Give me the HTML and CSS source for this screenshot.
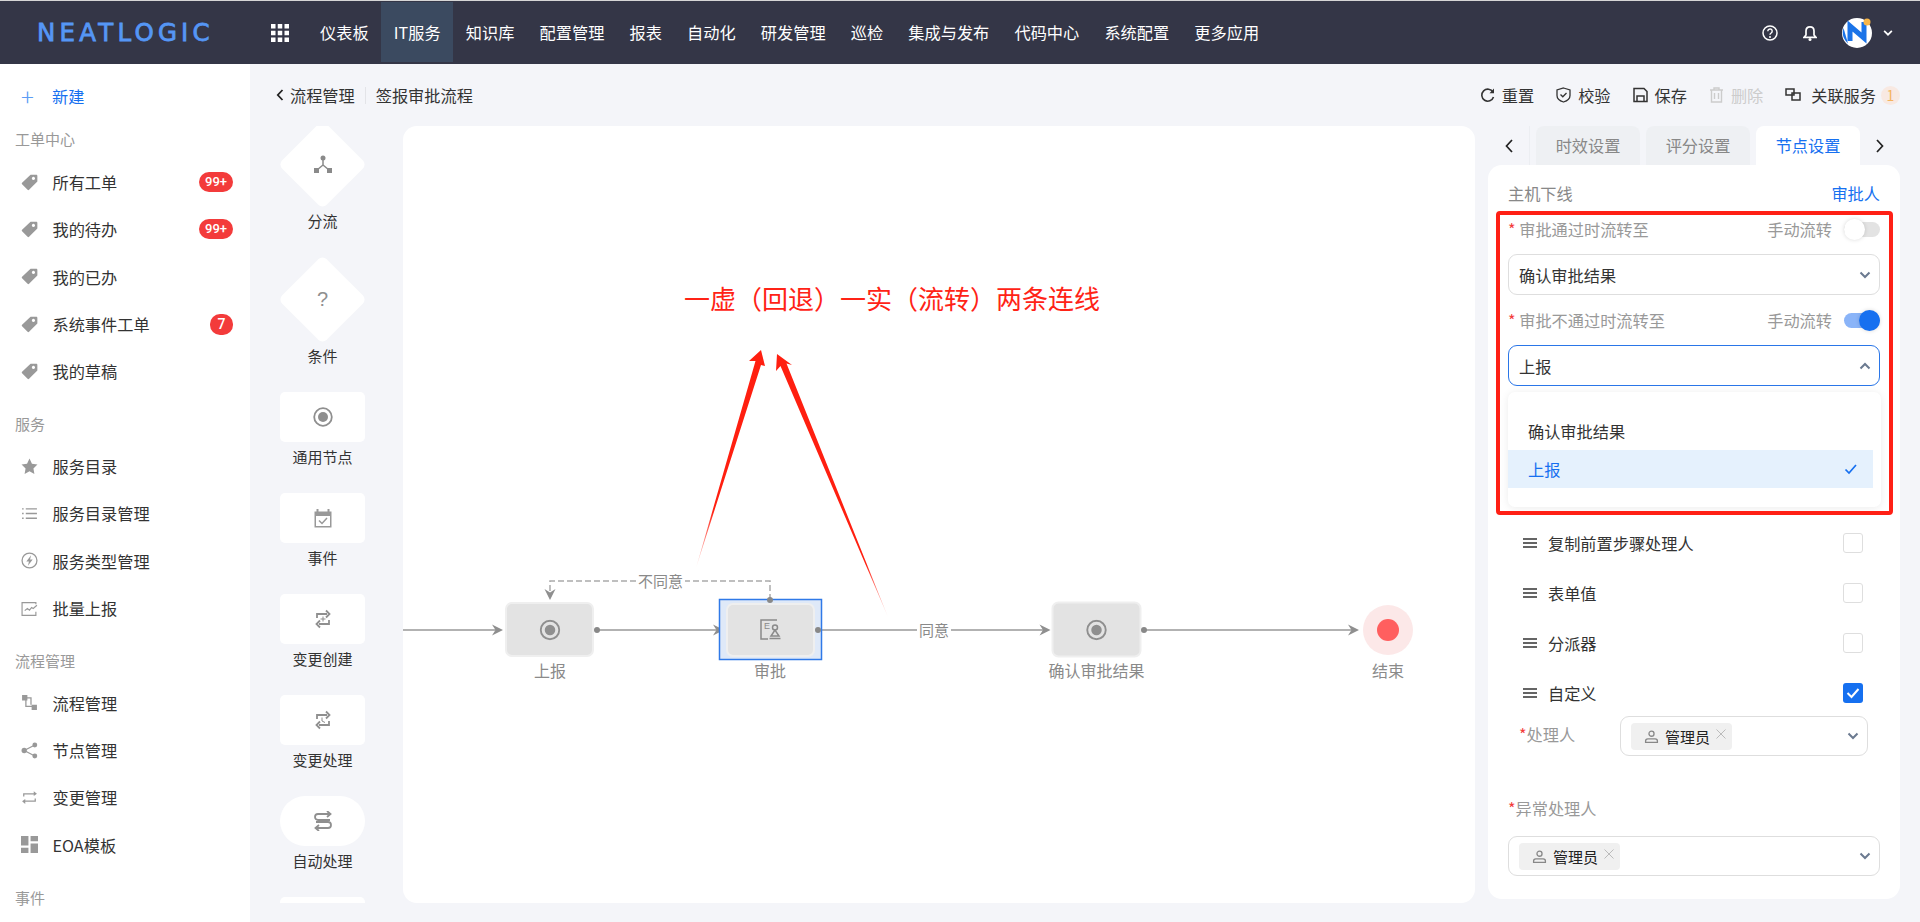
FILE: index.html
```html
<!DOCTYPE html>
<html lang="zh-CN">
<head>
  <meta charset="UTF-8" />
  <title>NeatLogic - 流程管理</title>
  <link rel="stylesheet" href="styles.css">
</head>
<body>
  <svg class="sprite" width="0" height="0">
    <symbol id="i-tag" viewBox="0 0 16 16"><path fill-rule="evenodd" d="M9 .6h5.400c.6 0 1 .4 1 1V7L7.600 14.900a1 1 0 0 1-1.400 0L1 9.700a1 1 0 0 1 0-1.400zM11.700 2.700a1.500 1.500 0 1 0 .01 0z"/></symbol>
    <symbol id="i-chev" viewBox="0 0 14 14"><path d="M2.500 4.500 7 9l4.500-4.500" fill="none" stroke="currentColor" stroke-width="2"/></symbol>
    <symbol id="i-close" viewBox="0 0 12 12"><path d="M1.500 1.500l9 9m0-9l-9 9" fill="none" stroke="currentColor" stroke-width="1"/></symbol>
    <symbol id="i-user" viewBox="0 0 16 16"><g fill="none" stroke="currentColor" stroke-width="1.400"><circle cx="8" cy="5" r="2.700"/><path d="M1.700 14.300v-1.500c0-1.400 1-2.300 2.400-2.300h7.800c1.400 0 2.400.9 2.400 2.300v1.500z"/></g></symbol>
    <symbol id="i-menu" viewBox="0 0 14 12"><path d="M0 2h14M0 6h14M0 10h14" stroke="currentColor" stroke-width="1.500"/></symbol>
    <symbol id="i-swap" viewBox="0 0 20 20"><path d="M4 9V5h10M13 1.500 16.500 5 13 8.500M16 11v4H6M7 11.500 3.500 15 7 18.500" fill="none" stroke="currentColor" stroke-width="1.800"/></symbol>
    <symbol id="i-node" viewBox="0 0 20 20"><circle cx="10" cy="10" r="8.800" fill="none" stroke="currentColor" stroke-width="1.800"/><circle cx="10" cy="10" r="5" fill="currentColor"/></symbol>
  </svg>

  <header class="topbar">
    <div class="logo">NEATLOGIC</div>
    <svg class="apps" width="18" height="18" viewBox="0 0 18 18" fill="#fff"><path d="M0 0h4.500v4.500H0zM6.750 0h4.500v4.500h-4.500zM13.500 0H18v4.500h-4.500zM0 6.750h4.500v4.500H0zM6.750 6.750h4.500v4.500h-4.500zM13.500 6.750H18v4.500h-4.500zM0 13.500h4.500V18H0zM6.750 13.500h4.500V18h-4.500zM13.500 13.500H18V18h-4.500z"/></svg>
    <nav class="nav">
      <a>仪表板</a>
      <a class="active">IT服务</a>
      <a>知识库</a>
      <a>配置管理</a>
      <a>报表</a>
      <a>自动化</a>
      <a>研发管理</a>
      <a>巡检</a>
      <a>集成与发布</a>
      <a>代码中心</a>
      <a>系统配置</a>
      <a>更多应用</a>
    </nav>
    <div class="top-right">
      <svg width="16" height="16" viewBox="0 0 16 16"><circle cx="8" cy="8" r="7" fill="none" stroke="#fff" stroke-width="1.500"/><path d="M5.800 6.200a2.200 2.200 0 1 1 3.400 1.800c-.8.500-1.200 1-1.200 1.800" fill="none" stroke="#fff" stroke-width="1.400"/><circle cx="8" cy="12" r="1" fill="#fff"/></svg>
      <svg width="14" height="16" viewBox="0 0 14 16"><path d="M7 1.800c-2.700 0-4 2-4 4.200v4L1 12.300h12L11 10V6c0-2.200-1.300-4.200-4-4.200z" fill="none" stroke="#fff" stroke-width="1.700"/><circle cx="7" cy="14.500" r="1.500" fill="#fff"/></svg>
      <svg class="avatar" width="32" height="32" viewBox="0 0 32 32"><circle cx="15" cy="17" r="15" fill="#fff"/><path d="M1.500 12A15 15 0 0 0 6 27.500z" fill="#1a73e8"/><path d="M8 25V10l14 12V6" fill="none" stroke="#1a73e8" stroke-width="5"/><circle cx="25" cy="6" r="3.500" fill="#f7b547"/></svg>
      <svg class="caret" width="12" height="12" viewBox="0 0 14 14"><use href="#i-chev"/></svg>
    </div>
  </header>

  <div class="layout">
    <aside class="sidebar">
      <a class="side-new"><span class="plus">+</span>新建</a>

      <div class="side-title first">工单中心</div>
      <a class="side-item"><svg class="side-icon"><use href="#i-tag"/></svg>所有工单<span class="badge">99+</span></a>
      <a class="side-item"><svg class="side-icon"><use href="#i-tag"/></svg>我的待办<span class="badge">99+</span></a>
      <a class="side-item"><svg class="side-icon"><use href="#i-tag"/></svg>我的已办</a>
      <a class="side-item"><svg class="side-icon"><use href="#i-tag"/></svg>系统事件工单<span class="badge round">7</span></a>
      <a class="side-item"><svg class="side-icon"><use href="#i-tag"/></svg>我的草稿</a>

      <div class="side-title">服务</div>
      <a class="side-item"><svg class="side-icon" viewBox="0 0 16 16"><path d="M8 .5l2.300 4.900 5.200.7-3.800 3.700.9 5.300L8 12.500l-4.600 2.600.9-5.300L.5 6.100l5.200-.7z"/></svg>服务目录</a>
      <a class="side-item"><svg class="side-icon" viewBox="0 0 16 16"><path d="M1 3h1.500v1.300H1zM4.500 3H15v1.300H4.500zM1 7.400h1.500v1.300H1zM4.500 7.400H15v1.300H4.500zM1 11.800h1.500v1.300H1zM4.500 11.800H15v1.300H4.500z"/></svg>服务目录管理</a>
      <a class="side-item"><svg class="side-icon" viewBox="0 0 16 16"><circle cx="8" cy="8" r="7" fill="none" stroke="#999" stroke-width="1.200"/><path d="M9.500 3 5 9h2.500l-1 4L11 7H8.500z"/></svg>服务类型管理</a>
      <a class="side-item"><svg class="side-icon" viewBox="0 0 16 16"><path d="M14 4V2.500H1v12h13V11M3.500 10l2.500-2 2 1.500 2-2.500 1.500 1L15 5" fill="none" stroke="#999" stroke-width="1.100"/></svg>批量上报</a>

      <div class="side-title">流程管理</div>
      <a class="side-item"><svg class="side-icon" viewBox="0 0 16 16"><path d="M1 1h5v5H1zM10 10h5v5h-5zM6 3h4v7H8.800V4.200H6zM4 6h1.200v5H10v1.200H4z"/></svg>流程管理</a>
      <a class="side-item"><svg class="side-icon" viewBox="0 0 16 16"><circle cx="3" cy="8" r="2.500"/><circle cx="13" cy="2.800" r="2.300"/><circle cx="13" cy="13.200" r="2.300"/><path d="M3 8l10-5.200M3 8l10 5.200" stroke="#999" stroke-width="1.200"/></svg>节点管理</a>
      <a class="side-item"><svg class="side-icon" viewBox="0 0 16 16"><path d="M2 7V4h10V2l3 2.500L12 6.500V5.200H3.200V7zM14 9v3H4v2l-3-2.500L4 9.500v1.300h8.800V9z"/></svg>变更管理</a>
      <a class="side-item"><svg class="side-icon" viewBox="0 0 16 16"><path d="M0 0h7v9H0zM9 0h7v5H9zM0 11h7v5H0zM9 7h7v9H9z"/></svg>EOA模板</a>

      <div class="side-title">事件</div>
    </aside>

    <main class="main">
      <div class="toolbar">
        <div class="crumbs">
          <svg class="back" width="8" height="12" viewBox="0 0 8 12"><path d="M6.500 1 1.800 6l4.700 5" fill="none" stroke="#222" stroke-width="1.800"/></svg>
          <span>流程管理</span>
          <i class="crumb-sep"></i>
          <span>签报审批流程</span>
        </div>
        <div class="actions">
          <a class="action"><svg width="15" height="16" viewBox="0 0 15 16"><path d="M13 5.200A6 6 0 1 0 13.500 10" fill="none" stroke="#333" stroke-width="1.600"/><path d="M14 1.500v4.700H9.500z" fill="#333"/></svg>重置</a>
          <a class="action"><svg width="15" height="16" viewBox="0 0 15 16"><path d="M7.500 1 14 3v5.500c0 3-3 5.500-6.500 6.500C4 14 1 11.500 1 8.500V3z" fill="none" stroke="#333" stroke-width="1.300"/><path d="M4.500 7.500l2.300 2.300 3.700-3.800" fill="none" stroke="#333" stroke-width="1.300"/></svg>校验</a>
          <a class="action"><svg width="15" height="16" viewBox="0 0 15 16"><path d="M1 1.500h10l3 3v10H1z" fill="none" stroke="#333" stroke-width="1.500"/><path d="M4 14.500V9h7v5.500" fill="none" stroke="#333" stroke-width="1.500"/></svg>保存</a>
          <a class="action off"><svg width="15" height="16" viewBox="0 0 15 16"><path d="M1 3h13M5 3V1h5v2M2.500 3v12h10V3M5.500 6v6M9.500 6v6" fill="none" stroke="#ccc" stroke-width="1.400"/></svg>删除</a>
          <a class="action wide"><svg width="16" height="14" viewBox="0 0 16 14"><path d="M1 1h8v6H1zM7 5h8v7H7z" fill="none" stroke="#333" stroke-width="1.500"/></svg>关联服务<span class="count">1</span></a>
        </div>
      </div>

      <div class="work">
        <div class="palette">
          <div class="palette-inner">
            <div class="tool"><div class="tile diamond"><svg width="18" height="18" viewBox="0 0 18 18" fill="#8a8a8a"><circle cx="9" cy="3" r="2.500"/><path d="M0 13h5v5H0zM13 13h5v5h-5z"/><path d="M9 4v6M9 10l-6 5M9 10l6 5" stroke="#8a8a8a" stroke-width="1.500"/></svg></div><div class="tool-name">分流</div></div>
            <div class="tool"><div class="tile diamond"><span class="question">?</span></div><div class="tool-name">条件</div></div>
            <div class="tool"><div class="tile"><svg class="tile-icon"><use href="#i-node"/></svg></div><div class="tool-name">通用节点</div></div>
            <div class="tool"><div class="tile"><svg class="tile-icon" viewBox="0 0 20 20"><path d="M1.500 3.500h17v16h-17z" fill="#999"/><path d="M4.500 1v4M15.500 1v4" stroke="#999" stroke-width="2"/><path d="M3 8h14v10H3z" fill="#fff"/><path d="M6 12.500l3 3 5-5.500" fill="none" stroke="#999" stroke-width="1.500"/></svg></div><div class="tool-name">事件</div></div>
            <div class="tool"><div class="tile"><svg class="tile-icon" viewBox="0 0 20 20"><use href="#i-swap" width="20" height="20"/><path d="M10 7.500v5M7.500 10h5" stroke="currentColor"/></svg></div><div class="tool-name">变更创建</div></div>
            <div class="tool"><div class="tile"><svg class="tile-icon" viewBox="0 0 20 20"><use href="#i-swap" width="20" height="20"/><path d="M9 7.500V11l3 1.500" fill="none" stroke="currentColor"/></svg></div><div class="tool-name">变更处理</div></div>
            <div class="tool"><div class="tile pill"><svg class="tile-icon" viewBox="0 0 20 20"><path d="M17 9H5a3 3 0 0 1 0-6h12M14 0l3.500 3L14 6M3 11h12a3 3 0 0 1 0 6H3M6 14l-3.500 3L6 20" fill="none" stroke="currentColor" stroke-width="1.800"/></svg></div><div class="tool-name">自动处理</div></div>
            <div class="tool"><div class="tile"></div></div>
          </div>
        </div>

        <div class="canvas">
          <svg class="flow" width="1072" height="777" viewBox="403 126 1072 777">
            <defs>
              <linearGradient id="fade1" gradientUnits="userSpaceOnUse" x1="696" y1="568" x2="712" y2="510"><stop offset="0" stop-color="#ff1f10" stop-opacity=".1"/><stop offset="1" stop-color="#ff1f10"/></linearGradient>
              <linearGradient id="fade2" gradientUnits="userSpaceOnUse" x1="888" y1="617" x2="865" y2="565"><stop offset="0" stop-color="#ff1f10" stop-opacity=".1"/><stop offset="1" stop-color="#ff1f10"/></linearGradient>
              <path id="head" d="M-11 -5.500 0 0-11 5.500-7.500 0z" fill="#8f8f8f"/>
            </defs>

            <text class="note" x="684" y="309">一虚（回退）一实（流转）两条连线</text>
            <polygon points="696,568 755.500,361 749,361 761,350 765,366 761,365" fill="url(#fade1)"/>
            <polygon points="888,617 780.500,366 776,371 777,354 792,365 786.500,363.500" fill="url(#fade2)"/>

            <g fill="none" stroke="#999" stroke-width="1.500">
              <path d="M403 630H500M597 630H721M818 630H1047M1144 630H1356"/>
              <path d="M770 600V581H550V597" stroke="#aaa" stroke-dasharray="6 3"/>
            </g>
            <use href="#head" x="503" y="630"/>
            <use href="#head" x="724" y="630"/>
            <use href="#head" x="1050.500" y="630"/>
            <use href="#head" x="1359" y="630"/>
            <use href="#head" transform="translate(550 600) rotate(90)"/>

            <rect x="636" y="570" width="49" height="22" fill="#fff"/>
            <text class="edge" x="660.500" y="586.500">不同意</text>
            <rect x="917" y="620" width="34" height="22" fill="#fff"/>
            <text class="edge" x="934" y="635.500">同意</text>

            <rect class="node" x="506" y="603" width="87" height="53" rx="6"/>
            <use href="#i-node" x="539.500" y="619.500" width="21" height="21" color="#8f8f8f"/>
            <circle class="dot" cx="597" cy="630" r="3"/>
            <text class="label" x="550" y="677">上报</text>

            <rect x="719.500" y="599.500" width="102" height="60" fill="#dfe9f8" stroke="#2f79e8" stroke-width="1.500"/>
            <rect class="node" x="727" y="604" width="87" height="52" rx="6"/>
            <g fill="none" stroke="#8a8a8a" stroke-width="1.500">
              <path d="M777 620H761V639H768"/>
              <circle cx="775" cy="627.500" r="2.500"/>
              <path d="M775 630 771 636H779zM769.500 638.500H780.500"/>
            </g>
            <text class="stamp" x="764" y="629">E</text>
            <circle class="dot" cx="770" cy="600" r="3"/>
            <circle class="dot" cx="818" cy="630" r="3"/>
            <text class="label" x="770" y="677">审批</text>

            <rect class="node" x="1052.500" y="602.500" width="88" height="54" rx="6"/>
            <use href="#i-node" x="1086" y="619.500" width="21" height="21" color="#8f8f8f"/>
            <circle class="dot" cx="1144" cy="630" r="3"/>
            <text class="label" x="1096.500" y="677">确认审批结果</text>

            <circle cx="1388" cy="630" r="25" fill="#fce8e8"/>
            <circle cx="1388" cy="630" r="11" fill="#ff5f5f"/>
            <text class="label" x="1388" y="677">结束</text>
          </svg>
        </div>

        <div class="side">
          <div class="tabs">
            <a class="tab-arrow left"><svg width="10" height="14" viewBox="0 0 10 14"><path d="M8 1 2.500 7 8 13" fill="none" stroke="#222" stroke-width="1.700"/></svg></a>
            <a class="tab">时效设置</a>
            <a class="tab">评分设置</a>
            <a class="tab on">节点设置</a>
            <a class="tab-arrow right"><svg width="10" height="14" viewBox="0 0 10 14"><path d="M2 1l5.500 6L2 13" fill="none" stroke="#222" stroke-width="1.700"/></svg></a>
          </div>

          <div class="panel">
            <div class="panel-head"><span>主机下线</span><span class="link">审批人</span></div>

            <div class="field-head"><span class="field-name"><em class="star">*</em> 审批通过时流转至</span><span class="manual">手动流转<i class="toggle"><b></b></i></span></div>
            <div class="select"><span>确认审批结果</span><svg class="sel-chev"><use href="#i-chev"/></svg></div>

            <div class="field-head"><span class="field-name"><em class="star">*</em> 审批不通过时流转至</span><span class="manual">手动流转<i class="toggle on"><b></b></i></span></div>
            <div class="select focus"><span>上报</span><svg class="sel-chev up"><use href="#i-chev"/></svg></div>

            <div class="rows">
              <div class="row"><svg class="grip"><use href="#i-menu"/></svg><span>复制前置步骤处理人</span><i class="check"></i></div>
              <div class="row"><svg class="grip"><use href="#i-menu"/></svg><span>表单值</span><i class="check"></i></div>
              <div class="row"><svg class="grip"><use href="#i-menu"/></svg><span>分派器</span><i class="check"></i></div>
              <div class="row"><svg class="grip"><use href="#i-menu"/></svg><span>自定义</span><i class="check on"><svg width="20" height="20" viewBox="0 0 20 20"><path d="M4.500 10l4 4 7-8" fill="none" stroke="#fff" stroke-width="2"/></svg></i></div>
            </div>

            <div class="owner">
              <span class="owner-name"><em class="star">*</em>处理人</span>
              <div class="select tags">
                <span class="tag"><svg class="tag-user"><use href="#i-user"/></svg>管理员<svg class="tag-x"><use href="#i-close"/></svg></span>
                <svg class="sel-chev"><use href="#i-chev"/></svg>
              </div>
            </div>

            <div class="field-head except"><span class="field-name"><em class="star">*</em>异常处理人</span></div>
            <div class="select tags">
              <span class="tag"><svg class="tag-user"><use href="#i-user"/></svg>管理员<svg class="tag-x"><use href="#i-close"/></svg></span>
              <svg class="sel-chev"><use href="#i-chev"/></svg>
            </div>

            <div class="dropdown">
              <div class="option">确认审批结果</div>
              <div class="option picked">上报<svg width="14" height="12" viewBox="0 0 14 12"><path d="M1.500 6.500l3.500 3.500 7-8" fill="none" stroke="#1670f0" stroke-width="1.700"/></svg></div>
            </div>
            <div class="red-box"></div>
          </div>
        </div>
      </div>
    </main>
  </div>
</body>
</html>
```

FILE: styles.css
```css
* {
  box-sizing: border-box;
}
html, body {
  margin: 0;
  height: 922px;
  overflow: hidden;
}
body {
  font-family: "Noto Sans CJK SC", "Noto Sans", sans-serif;
  font-size: 16.2px;
  color: #333;
  background: #f4f5f9;
}
.sprite {
  position: absolute;
}
em {
  font-style: normal;
}

/* top bar */
.topbar {
  height: 64px;
  display: flex;
  align-items: center;
  padding-left: 37px;
  background: #343647;
  border-top: 1px solid #d6d6d6;
  color: #fff;
}
.logo {
  width: 234px;
  font-family: "DejaVu Sans", sans-serif;
  font-size: 24.5px;
  line-height: 24px;
  letter-spacing: 4.2px;
  color: #5596f5;
  -webkit-text-stroke: 0.8px #5596f5;
}
.apps {
  flex: none;
}
.nav {
  display: flex;
  margin: 1px 0 0 18.5px;
  height: 60px;
  align-self: flex-start;
}
.nav a {
  padding: 0 12.6px;
  line-height: 60px;
  white-space: nowrap;
}
.nav a.active {
  background: #3b4a60;
}
.top-right {
  margin-left: auto;
  padding-right: 26px;
  display: flex;
  align-items: center;
  gap: 25px;
}
.avatar {
  margin-right: -17px;
  margin-top: -1px;
}
.caret {
  color: #fff;
}

/* page frame */
.layout {
  height: 858px;
  display: flex;
}
.sidebar {
  width: 250px;
  flex: none;
  padding-top: 8px;
  background: #fff;
  overflow: hidden;
}
.side-new {
  height: 48px;
  margin-bottom: -9px;
  padding-left: 21px;
  display: flex;
  align-items: center;
  color: #1670f0;
}
.plus {
  width: 31px;
  font-size: 24px;
  font-weight: 300;
  color: #5c9cf5;
  line-height: 24px;
}
.side-title {
  height: 36px;
  margin-top: 11.5px;
  padding-left: 15px;
  line-height: 36px;
  font-size: 15px;
  color: #999;
}
.side-title.first {
  margin-bottom: 2px;
  margin-top: 9.5px;
}
.side-item {
  height: 47.3px;
  padding: 0 17px 0 21px;
  display: flex;
  align-items: center;
}
.side-icon {
  width: 17px;
  height: 17px;
  margin-right: 14.5px;
  fill: #999;
  flex: none;
}
.badge {
  margin-left: auto;
  height: 20px;
  padding: 0 6px;
  border-radius: 10px;
  background: #f33b3b;
  color: #fff;
  font-family: "Roboto", sans-serif;
  font-size: 13px;
  font-weight: 500;
  line-height: 20px;
}
.badge.round {
  width: 23px;
  height: 21px;
  padding: 0;
  text-align: center;
  line-height: 21px;
  font-size: 14px;
}
.main {
  flex: 1;
  min-width: 0;
  display: flex;
  flex-direction: column;
}

/* toolbar */
.toolbar {
  height: 62px;
  padding: 0 20px 0 26px;
  display: flex;
  align-items: center;
  justify-content: space-between;
}
.crumbs {
  display: flex;
  align-items: center;
}
.back {
  margin-right: 6px;
}
.crumb-sep {
  width: 1px;
  height: 17px;
  margin: 0 10px;
  background: #e3e4e8;
}
.actions {
  display: flex;
  align-items: center;
  gap: 22px;
}
.action {
  display: flex;
  align-items: center;
  gap: 7px;
}
.action.off {
  color: #ccc;
}
.action.wide {
  gap: 10px;
}
.count {
  width: 19px;
  height: 19px;
  margin-left: -5px;
  border-radius: 50%;
  background: #f8e9e2;
  color: #f5b45f;
  font-size: 14px;
  line-height: 19px;
  text-align: center;
}

/* work area */
.work {
  height: 777px;
  display: flex;
}
.palette {
  width: 153px;
  flex: none;
  padding-left: 30px;
  overflow: hidden;
}
.palette-inner {
  margin-top: -4px;
}
.tool {
  width: 85px;
  margin-bottom: 26px;
  display: flex;
  flex-direction: column;
  align-items: center;
}
.tile {
  width: 85px;
  height: 50px;
  flex: none;
  display: flex;
  align-items: center;
  justify-content: center;
  background: #fff;
  border-radius: 5px;
  color: #8f8f8f;
}
.tile.pill {
  border-radius: 25px;
}
.tile.diamond {
  height: 84px;
  background: none;
  position: relative;
}
.tile.diamond::before {
  content: "";
  position: absolute;
  left: 11px;
  top: 10.5px;
  width: 63px;
  height: 63px;
  border-radius: 6px;
  background: #fff;
  transform: rotate(45deg);
}
.tile.diamond > * {
  position: relative;
}
.tile-icon {
  width: 20px;
  height: 20px;
}
.question {
  font-family: "Liberation Sans", sans-serif;
  font-size: 20px;
  color: #8f8f8f;
}
.tool-name {
  margin-top: 4px;
  font-size: 15px;
  line-height: 21px;
  white-space: nowrap;
}
.canvas {
  width: 1072px;
  flex: none;
  background: #fff;
  border-radius: 14px;
  overflow: hidden;
}
.flow {
  display: block;
}
.flow text {
  font-family: "Noto Sans CJK SC", sans-serif;
}
.flow .note {
  font-size: 26px;
  fill: #ff2316;
}
.flow .edge {
  font-size: 15px;
  fill: #8a8a8a;
  text-anchor: middle;
}
.flow .label {
  font-size: 16px;
  fill: #8a8a8a;
  text-anchor: middle;
}
.flow .stamp {
  font-family: "Liberation Sans", sans-serif;
  font-size: 9px;
  fill: #8a8a8a;
}
.node {
  fill: #e3e3e3;
  stroke: #efefef;
  stroke-width: 2;
}
.dot {
  fill: #888;
}

/* right side */
.side {
  flex: 1;
  min-width: 0;
  padding: 0 20px 0 13px;
}
.tabs {
  height: 39px;
  display: flex;
  gap: 6px;
}
.tab-arrow {
  width: 40px;
  flex: none;
  display: flex;
  align-items: center;
  justify-content: center;
}
.tab-arrow.left {
  width: 42px;
  border-right: 1px solid #eceef2;
}
.tab-arrow.right {
  margin-left: -6px;
}
.tab {
  width: 104px;
  flex: none;
  background: #eef0f3;
  border-radius: 8px 8px 0 0;
  color: #888;
  line-height: 39px;
  text-align: center;
}
.tab.on {
  background: #fff;
  color: #1670f0;
}
.panel {
  position: relative;
  height: 734px;
  padding: 16px 20px 0;
  background: #fff;
  border-radius: 14px;
}
.panel-head {
  height: 24px;
  display: flex;
  justify-content: space-between;
  line-height: 24px;
  color: #888;
}
.link {
  color: #1670f0;
}
.field-head {
  height: 24px;
  margin-top: 12px;
  display: flex;
  align-items: center;
  justify-content: space-between;
  color: #999;
}
.star {
  color: #f33b3b;
}
.manual {
  display: flex;
  align-items: center;
  gap: 12px;
}
.toggle {
  position: relative;
  width: 36px;
  height: 15px;
  border-radius: 8px;
  background: #e3e3e3;
}
.toggle b {
  position: absolute;
  left: 0;
  top: -3px;
  width: 21px;
  height: 21px;
  border-radius: 50%;
  background: #fff;
  box-shadow: 0 0 4px rgba(0, 0, 0, 0.15);
}
.toggle.on {
  background: #8ab4f8;
}
.toggle.on b {
  left: 15px;
  background: #1670f0;
}
.select {
  height: 41px;
  margin-top: 13px;
  padding: 0 7px 0 10px;
  display: flex;
  align-items: center;
  justify-content: space-between;
  border: 1px solid #dedede;
  border-radius: 9px;
}
.select + .field-head {
  margin-top: 13px;
}
.select.focus {
  border-color: #2a76e8;
}
.sel-chev {
  width: 14px;
  height: 14px;
  color: #6b7a90;
}
.sel-chev.up {
  transform: rotate(180deg);
}
.rows {
  margin-top: 132px;
}
.row {
  height: 50px;
  padding: 0 17px 0 15px;
  display: flex;
  align-items: center;
}
.grip {
  width: 14px;
  height: 12px;
  margin-right: 11px;
}
.check {
  width: 20px;
  height: 20px;
  margin-left: auto;
  border: 1px solid #dedede;
  border-radius: 3px;
}
.check.on {
  border: 0;
  background: #1670f0;
}
.owner {
  margin: -2px 12px 0 11px;
  display: flex;
}
.owner-name {
  width: 101px;
  margin-top: 6px;
  color: #999;
}
.owner .select {
  flex: 1;
}
.select.tags {
  height: 40px;
  margin-top: 0;
  padding-left: 10px;
}
.field-head.except {
  margin-top: 40px;
  margin-bottom: 16px;
}
.tag {
  height: 27px;
  padding: 0 5px 0 13px;
  display: flex;
  align-items: center;
  background: #f0f0f0;
  border-radius: 4px;
  font-size: 15px;
  color: #222;
}
.tag-user {
  width: 15px;
  height: 15px;
  margin-right: 6px;
  color: #888;
}
.tag-x {
  width: 12px;
  height: 12px;
  margin-left: 5px;
  margin-top: -4px;
  color: #bbb;
}
.dropdown {
  position: absolute;
  left: 20px;
  top: 227px;
  width: 373px;
  height: 115px;
  padding: 20px 8px 0 0;
  background: #fff;
  border-radius: 7px;
  box-shadow: 0 1px 8px rgba(0, 0, 0, 0.08);
}
.option {
  height: 38px;
  padding: 0 15px 0 20px;
  display: flex;
  align-items: center;
  justify-content: space-between;
}
.option.picked {
  background: #e5f1fd;
  color: #1670f0;
}
.red-box {
  position: absolute;
  left: 8px;
  top: 46px;
  width: 397px;
  height: 304px;
  border: 4px solid #ff2015;
  border-radius: 4px;
}
```
